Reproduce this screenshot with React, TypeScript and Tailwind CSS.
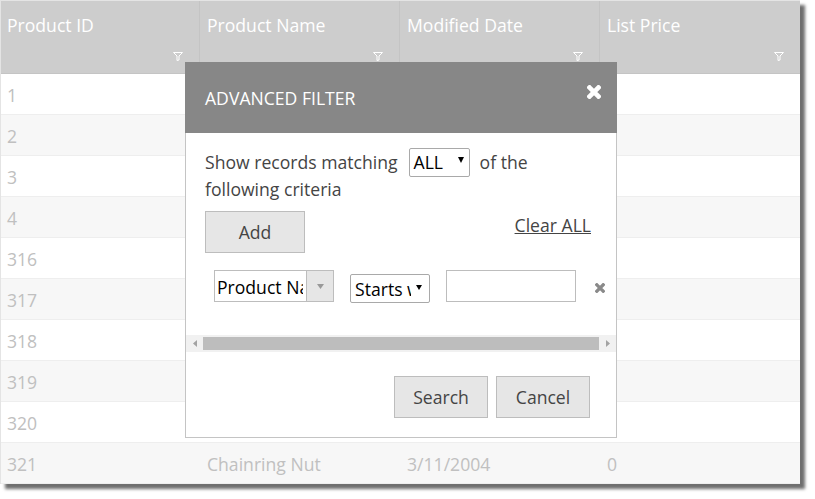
import React from "react";

const Funnel = () => (
  <svg width="10" height="9" viewBox="0 0 10 9" fill="none" stroke="#ffffff" strokeWidth="1" className="absolute right-[16px] bottom-[12px]">
    <path d="M0.5 0.5H9.5L6 4V8L4 8.5V4Z" />
  </svg>
);

const heads = ["Product ID", "Product Name", "Modified Date", "List Price"];
const rows = [
  ["1", "", "", ""],
  ["2", "", "", ""],
  ["3", "", "", ""],
  ["4", "", "", ""],
  ["316", "", "", ""],
  ["317", "", "", ""],
  ["318", "", "", ""],
  ["319", "", "", ""],
  ["320", "", "", ""],
  ["321", "Chainring Nut", "3/11/2004", "0"],
];

const Caret = ({ className, w = 7, h = 5 }: { className: string; w?: number; h?: number }) => (
  <svg width={w} height={h} viewBox="0 0 7 5" preserveAspectRatio="none" className={className}>
    <path d="M0 0H7L3.5 5Z" fill="currentColor" />
  </svg>
);

const X = ({ size, color }: { size: number; color: string }) => (
  <svg width={size} height={size} viewBox="0 0 12 12">
    <path d="M2.2 2.2L9.8 9.8M9.8 2.2L2.2 9.8" stroke={color} strokeWidth="4" strokeLinecap="square" />
  </svg>
);

const btn = "h-[42px] bg-[#e6e6e6] border border-[#bdbdbd] text-[#444] text-[17.6px] flex items-center justify-center";

export default function App() {
  return (
    <div className="relative w-[815px] h-[499px] bg-white overflow-hidden text-[17.6px] font-['Open_Sans','Noto_Sans',sans-serif]">
      <div className="w-[800px] shadow-[5px_5px_3px_#6f6f6f] border-t border-l border-[#e4e4e4]">
        <div className="grid grid-cols-[199px_200px_200px_200px] h-[73px] bg-[#cdcdcd] border-b border-[#c4c4c4]">
          {heads.map((h, i) => (
            <div key={h} className={`relative pt-[12px] leading-[24px] text-white ${i === 0 ? "pl-[6px]" : "pl-[7px]"} ${i < 3 ? "border-r border-[#c4c4c4]" : ""}`}>
              {h}
              <Funnel />
            </div>
          ))}
        </div>
        {rows.map((r, i) => (
          <div key={r[0]} className={`grid grid-cols-[199px_200px_200px_200px] h-[41px] items-center border-b border-[#eeeeee] text-[#c0c0c0] ${i % 2 ? "bg-[#f7f7f7]" : "bg-white"}`}>
            {r.map((c, j) => (
              <div key={j} className={`pt-[2px] leading-[24px] ${j === 0 ? "pl-[6px]" : "pl-[7px]"}`}>{c}</div>
            ))}
          </div>
        ))}
      </div>

      <div className="absolute left-[185px] top-[62px] w-[432px] h-[376px] bg-white border border-t-0 border-[#c4c4c4] flex flex-col">
        <div className="-mx-px h-[71px] bg-[#878787] flex items-start justify-between text-white">
          <span className="ml-[20px] mt-[24px] leading-[24px]">ADVANCED FILTER</span>
          <span className="mr-[16px] mt-[23px]"><X size={14} color="#ffffff" /></span>
        </div>
        <div className="flex-1 flex flex-col text-[#444]">
          <div className="pl-[19px] pr-[25px] pt-[15px]">
            <div className="flex items-center h-[28px]">
              <span>Show records matching</span>
              <div className="relative ml-[11px] w-[61px] h-[29px] border border-[#a9a9a9] rounded-[2px] text-black flex items-center pl-[4px]">
                ALL
                <Caret className="absolute right-[5px] top-[8px]" w={6} h={6} />
              </div>
              <span className="ml-[10px]">of the</span>
            </div>
            <div className="leading-[26px]">following criteria</div>
            <div className="flex items-start justify-between mt-[9px]">
              <div className={`${btn} w-[100px]`}>Add</div>
              <a className="underline mt-[2px] leading-[24px] text-[#444]">Clear ALL</a>
            </div>
          </div>
          <div className="flex items-start pl-[28px] mt-[17px] h-[33px] text-black">
            <div className="flex w-[120px] h-[32px] border border-[#bdbdbd] bg-white">
              <div className="w-[91px] shrink-0 pl-[2px]">
                <div className="w-[86px] overflow-hidden whitespace-nowrap leading-[32px]">Product Name</div>
              </div>
              <div className="flex-1 bg-[#e6e6e6] border-l border-[#bdbdbd] flex items-center justify-center text-[#999]">
                <Caret className="" />
              </div>
            </div>
            <div className="relative ml-[16px] mt-[4px] w-[80px] h-[29px] border border-[#a9a9a9] rounded-[2px] bg-white">
              <div className="w-[56px] ml-[4px] overflow-hidden whitespace-nowrap leading-[28px]">Starts with</div>
              <Caret className="absolute right-[7px] top-[10px]" w={6} />
            </div>
            <div className="ml-[16px] w-[130px] h-[32px] border border-[#bdbdbd] bg-white" />
            <span className="ml-[19px] mt-[13px]"><X size={10} color="#8a8a8a" /></span>
          </div>
          <div className="mt-[32px] h-[17px] bg-[#f1f1f1] flex items-center">
            <div className="w-[17px] flex justify-center text-[#a3a3a3]">
              <svg width="4" height="7" viewBox="0 0 4 7"><path d="M4 0V7L0 3.5Z" fill="currentColor" /></svg>
            </div>
            <div className="w-[396px] h-[13px] bg-[#bdbdbd]" />
            <div className="flex-1 flex justify-center text-[#a3a3a3]">
              <svg width="4" height="7" viewBox="0 0 4 7"><path d="M0 0V7L4 3.5Z" fill="currentColor" /></svg>
            </div>
          </div>
          <div className="flex justify-end gap-[8px] pr-[26px] mt-[24px]">
            <div className={`${btn} w-[94px]`}>Search</div>
            <div className={`${btn} w-[94px]`}>Cancel</div>
          </div>
        </div>
      </div>
    </div>
  );
}
